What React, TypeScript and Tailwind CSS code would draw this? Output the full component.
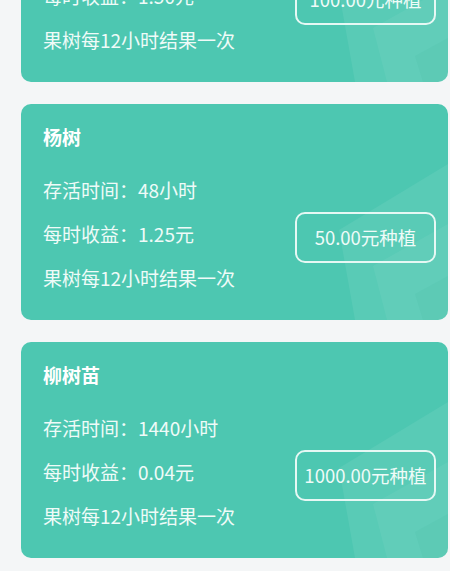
import React from "react";

type Tree = {
  name: string;
  hours: number;
  income: string;
  price: string;
};

const trees: Tree[] = [
  { name: "桃树", hours: 96, income: "1.50", price: "100.00" },
  { name: "杨树", hours: 48, income: "1.25", price: "50.00" },
  { name: "柳树苗", hours: 1440, income: "0.04", price: "1000.00" },
];

const Decoration = () => (
  <svg
    className="pointer-events-none absolute inset-0 h-full w-full"
    viewBox="0 0 427 216"
    preserveAspectRatio="none"
  >
    <polygon points="427,60 318,126 334,216 427,216" fill="#ffffff" fillOpacity="0.07" />
    <polygon points="427,120 352,162 366,216 427,216" fill="#ffffff" fillOpacity="0.05" />
    <polygon points="427,172 394,190 402,216 427,216" fill="#2aa88f" fillOpacity="0.07" />
  </svg>
);

const TreeCard = ({ tree }: { tree: Tree }) => {
  return (
    <div className="relative flex h-[216px] w-[427px] shrink-0 justify-between overflow-hidden rounded-[10px] bg-[#4dc7b1]">
      <Decoration />
      <div className="relative flex flex-col pl-[22px] pt-[21px] text-[19px] leading-[24px] text-[#effbf8]">
        <div className="font-bold text-white">{tree.name}</div>
        <div className="mt-[29px] flex flex-col gap-[20px]">
          <div>存活时间：{tree.hours}小时</div>
          <div>每时收益：{tree.income}元</div>
          <div>果树每12小时结果一次</div>
        </div>
      </div>
      <div className="relative mr-[12px] mt-[108px]">
        <div className="flex h-[51px] w-[141px] items-center justify-center rounded-[10px] border-2 border-[#e6f8f4] text-[18.5px] text-[#effbf8]">
          {tree.price}元种植
        </div>
      </div>
    </div>
  );
};

const App = () => {
  return (
    <div
      className="h-[571px] w-[450px] overflow-hidden bg-[#f4f6f7]"
      style={{ fontFamily: '"Noto Sans CJK SC", "Noto Sans", Roboto, sans-serif' }}
    >
      <div className="mt-[-134px] flex flex-col gap-[22px] pl-[21px] pr-[2px]">
        {trees.map((tree) => (
          <TreeCard key={tree.name} tree={tree} />
        ))}
      </div>
    </div>
  );
};

export default App;
